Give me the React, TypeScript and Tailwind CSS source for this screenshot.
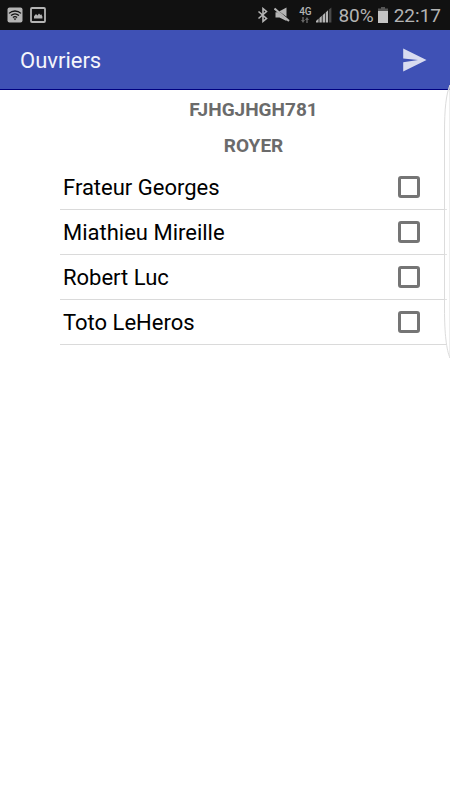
import { useState } from 'react';

interface Worker {
  id: number;
  name: string;
}

const workers: Worker[] = [
  { id: 1, name: 'Frateur Georges' },
  { id: 2, name: 'Miathieu Mireille' },
  { id: 3, name: 'Robert Luc' },
  { id: 4, name: 'Toto LeHeros' },
];

const StatusBar = () => (
  <div className="flex h-[30px] items-center justify-between bg-[#111111] pl-[7px] pr-[9px] text-[#b4b4b4]">
    <div className="flex items-center gap-[7px]">
      <svg width="16" height="16" viewBox="0 0 16 16">
        <rect x="0.5" y="0.5" width="15" height="15" rx="2" fill="#b4b4b4" />
        <g fill="none" stroke="#111111" strokeWidth="1.3">
          <path d="M2 6.4C5.4 3.2 10.6 3.2 14 6.4" />
          <path d="M4 8.6C6.4 6.5 9.6 6.5 12 8.6" />
          <path d="M5.9 10.5C7.2 9.4 8.8 9.4 10.1 10.5" />
        </g>
        <path d="M6.5 11.4h3L8 13.2z" fill="#111111" />
      </svg>
      <svg width="16" height="16" viewBox="0 0 16 16">
        <rect x="1" y="1" width="14" height="14" rx="1" fill="none" stroke="#b4b4b4" strokeWidth="1.8" />
        <path d="M4 11.5V9.3L6 7.1l1.4 1.4L9 6.5l1.4 1.6.9-.8L12.4 9.5v2z" fill="#b4b4b4" />
      </svg>
    </div>
    <div className="flex items-center">
      <svg width="12" height="16" viewBox="0 0 12 16" fill="none" stroke="#b4b4b4" strokeWidth="1.6">
        <path d="M1.5 4.5L9.5 11.5L6 14.4V1.6L9.5 4.5L1.5 11.5" />
      </svg>
      <svg className="ml-[5px]" width="16" height="16" viewBox="0 0 16 16">
        <path d="M5 4.5L12.5 0.5V9.8L6.5 5.2z" fill="#b4b4b4" />
        <path d="M1.5 5.2h2.2L12.5 12.6V14L5.5 10.5h-4z" fill="#b4b4b4" />
        <path d="M0.5 1.5L15 14" stroke="#b4b4b4" strokeWidth="2" />
      </svg>
      <div className="ml-2 flex w-[14px] flex-col items-center">
        <span className="text-[10px] font-medium leading-[10px]">4G</span>
        <svg width="10" height="6" viewBox="0 0 10 6" fill="#666666">
          <path d="M2.3 0h1.4v3H5L3 6 1 3h1.3zM6.3 6h1.4V3H9L7 0 5 3h1.3z" />
        </svg>
      </div>
      <svg className="ml-1" width="16" height="16" viewBox="0 0 16 16">
        <path d="M0 15.5v-1.6L2.6 11.6v3.9zM3.4 15.5V11L5.8 8.8v6.7zM6.6 15.5V8.2L9 6v9.5z" fill="#b4b4b4" />
        <path d="M9.7 15.5V5.4L12 3.3v12.2z" fill="#b4b4b4" />
        <path d="M12.8 15.5V2.6L15.4 0.4v15.1z" fill="#4a4a4a" />
      </svg>
      <span className="ml-1.5 pt-0.5 text-[19px] leading-7">80%</span>
      <svg className="ml-1" width="10" height="16" viewBox="0 0 10 16">
        <path d="M3 0h4v1.5h3V4H0V1.5h3z" fill="#555555" />
        <path d="M0 4h10v12H0z" fill="#c4c4c4" />
      </svg>
      <time className="ml-1.5 pt-0.5 text-[19px] leading-7">22:17</time>
    </div>
  </div>
);

const AppBar = () => (
  <header className="flex h-[60px] items-center justify-between border-b border-[#000080] bg-[#3f51b5] pl-5 pr-[22px]">
    <h1 className="pt-[3px] text-[22px] leading-7 text-[#f4f5fb]">Ouvriers</h1>
    <button type="button" aria-label="Envoyer" className="cursor-pointer">
      <svg width="26" height="26" viewBox="0 0 26 26">
        <path d="M1.2 1.5L24.5 13L1.2 24.5V15.2L16 13L1.2 11.4z" fill="#d9dcf0" />
      </svg>
    </button>
  </header>
);

const App = () => {
  const [selected, setSelected] = useState<number[]>([]);

  const toggle = (id: number) => {
    setSelected((ids) => (ids.includes(id) ? ids.filter((i) => i !== id) : [...ids, id]));
  };

  return (
    <div className="relative min-h-screen overflow-hidden bg-white font-['Roboto',sans-serif]">
      <StatusBar />
      <AppBar />
      <main className="pl-[60px] pr-[3px] pt-0.5">
        <h2 className="text-center text-[19px] font-bold leading-9 text-[#6b6b6b]">FJHGJHGH781</h2>
        <h2 className="text-center text-[19px] font-bold leading-9 text-[#6b6b6b]">ROYER</h2>
        <ul className="pt-px">
          {workers.map((w) => (
            <li key={w.id} className="border-b border-[#dadada]">
              <label className="flex h-11 items-center justify-between pl-[3px] pr-[27px] text-[22px] text-black">
                {w.name}
                <input
                  type="checkbox"
                  checked={selected.includes(w.id)}
                  onChange={() => toggle(w.id)}
                  className="size-[22px] appearance-none rounded-[3px] border-[3px] border-[#757575] checked:bg-[#3f51b5]"
                />
              </label>
            </li>
          ))}
        </ul>
      </main>
      {/* edge panel handle */}
      <svg
        className="pointer-events-none absolute right-0 top-[84px]"
        width="7"
        height="276"
        viewBox="0 0 7 276"
      >
        <path d="M7 1C3 10 1.5 26 1.5 48V225C1.5 250 3.5 266 7 274z" fill="#ffffff" fillOpacity="0.25" stroke="#dcdcdc" />
      </svg>
    </div>
  );
};

export default App;
